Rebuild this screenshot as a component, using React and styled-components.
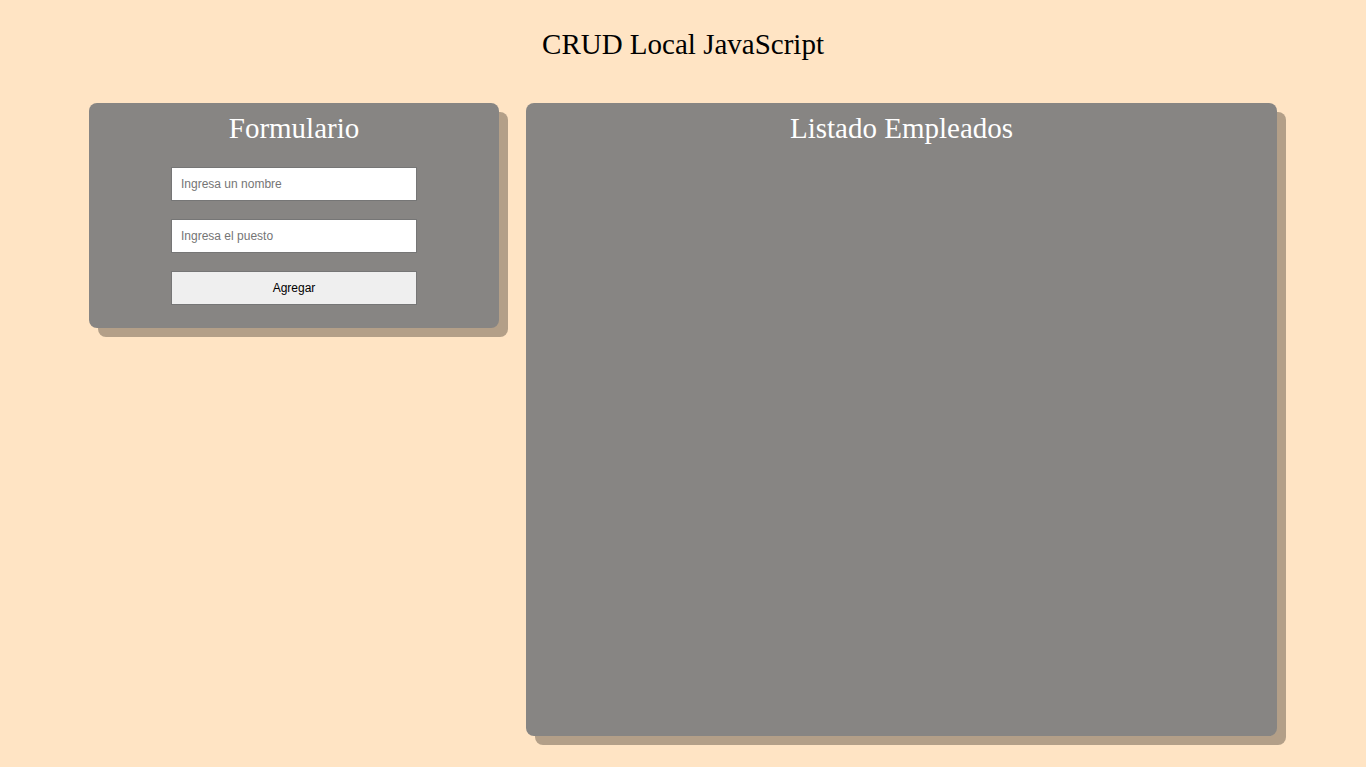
import styled, { createGlobalStyle } from "styled-components";

const GlobalStyle = createGlobalStyle`
  body {
    margin: 0;
    background-color: #ffe4c4;
    font-family: "Liberation Serif", "Times New Roman", serif;
  }
`;

const Header = styled.h1`
  margin: 28px 0 43px;
  text-align: center;
  font-size: 29px;
  font-weight: normal;
  line-height: 32px;
  color: #000;
`;

const Main = styled.main`
  display: flex;
  gap: 27px;
  width: 1188px;
  margin: 0 auto;
  padding-bottom: 31px;
  align-items: flex-start;
`;

const Panel = styled.section`
  width: ${(p) => p.$width}px;
  min-height: ${(p) => p.$minHeight || 0}px;
  box-sizing: border-box;
  background-color: #878583;
  border-radius: 8px;
  box-shadow: 9px 9px 0 #b39f88;
  padding: 9px 0 23px;
  display: flex;
  flex-direction: column;
  align-items: center;
`;

const PanelTitle = styled.h2`
  margin: 0;
  font-size: 29px;
  font-weight: normal;
  line-height: 32px;
  color: #fff;
`;

const Form = styled.form`
  display: flex;
  flex-direction: column;
  gap: 18px;
  width: 246px;
  margin-top: 23px;
`;

const Input = styled.input`
  box-sizing: border-box;
  height: 34px;
  width: 100%;
  padding: 0 9px;
  border: 1px solid #767676;
  background: #fff;
  font-family: "Liberation Sans", Arial, sans-serif;
  font-size: 12px;
  color: #000;
  outline: none;

  &::placeholder {
    color: #757575;
  }
`;

const Button = styled.button`
  box-sizing: border-box;
  height: 34px;
  width: 100%;
  border: 1px solid #767676;
  background: #efefef;
  font-family: "Liberation Sans", Arial, sans-serif;
  font-size: 12px;
  color: #000;
  cursor: pointer;
`;

const App = () => {
  return (
    <>
      <GlobalStyle />
      <Header>CRUD Local JavaScript</Header>
      <Main>
        <Panel $width={410}>
          <PanelTitle>Formulario</PanelTitle>
          <Form onSubmit={(e) => e.preventDefault()}>
            <Input type="text" placeholder="Ingresa un nombre" />
            <Input type="text" placeholder="Ingresa el puesto" />
            <Button type="submit">Agregar</Button>
          </Form>
        </Panel>
        <Panel $width={751} $minHeight={633}>
          <PanelTitle>Listado Empleados</PanelTitle>
        </Panel>
      </Main>
    </>
  );
};

export default App;
